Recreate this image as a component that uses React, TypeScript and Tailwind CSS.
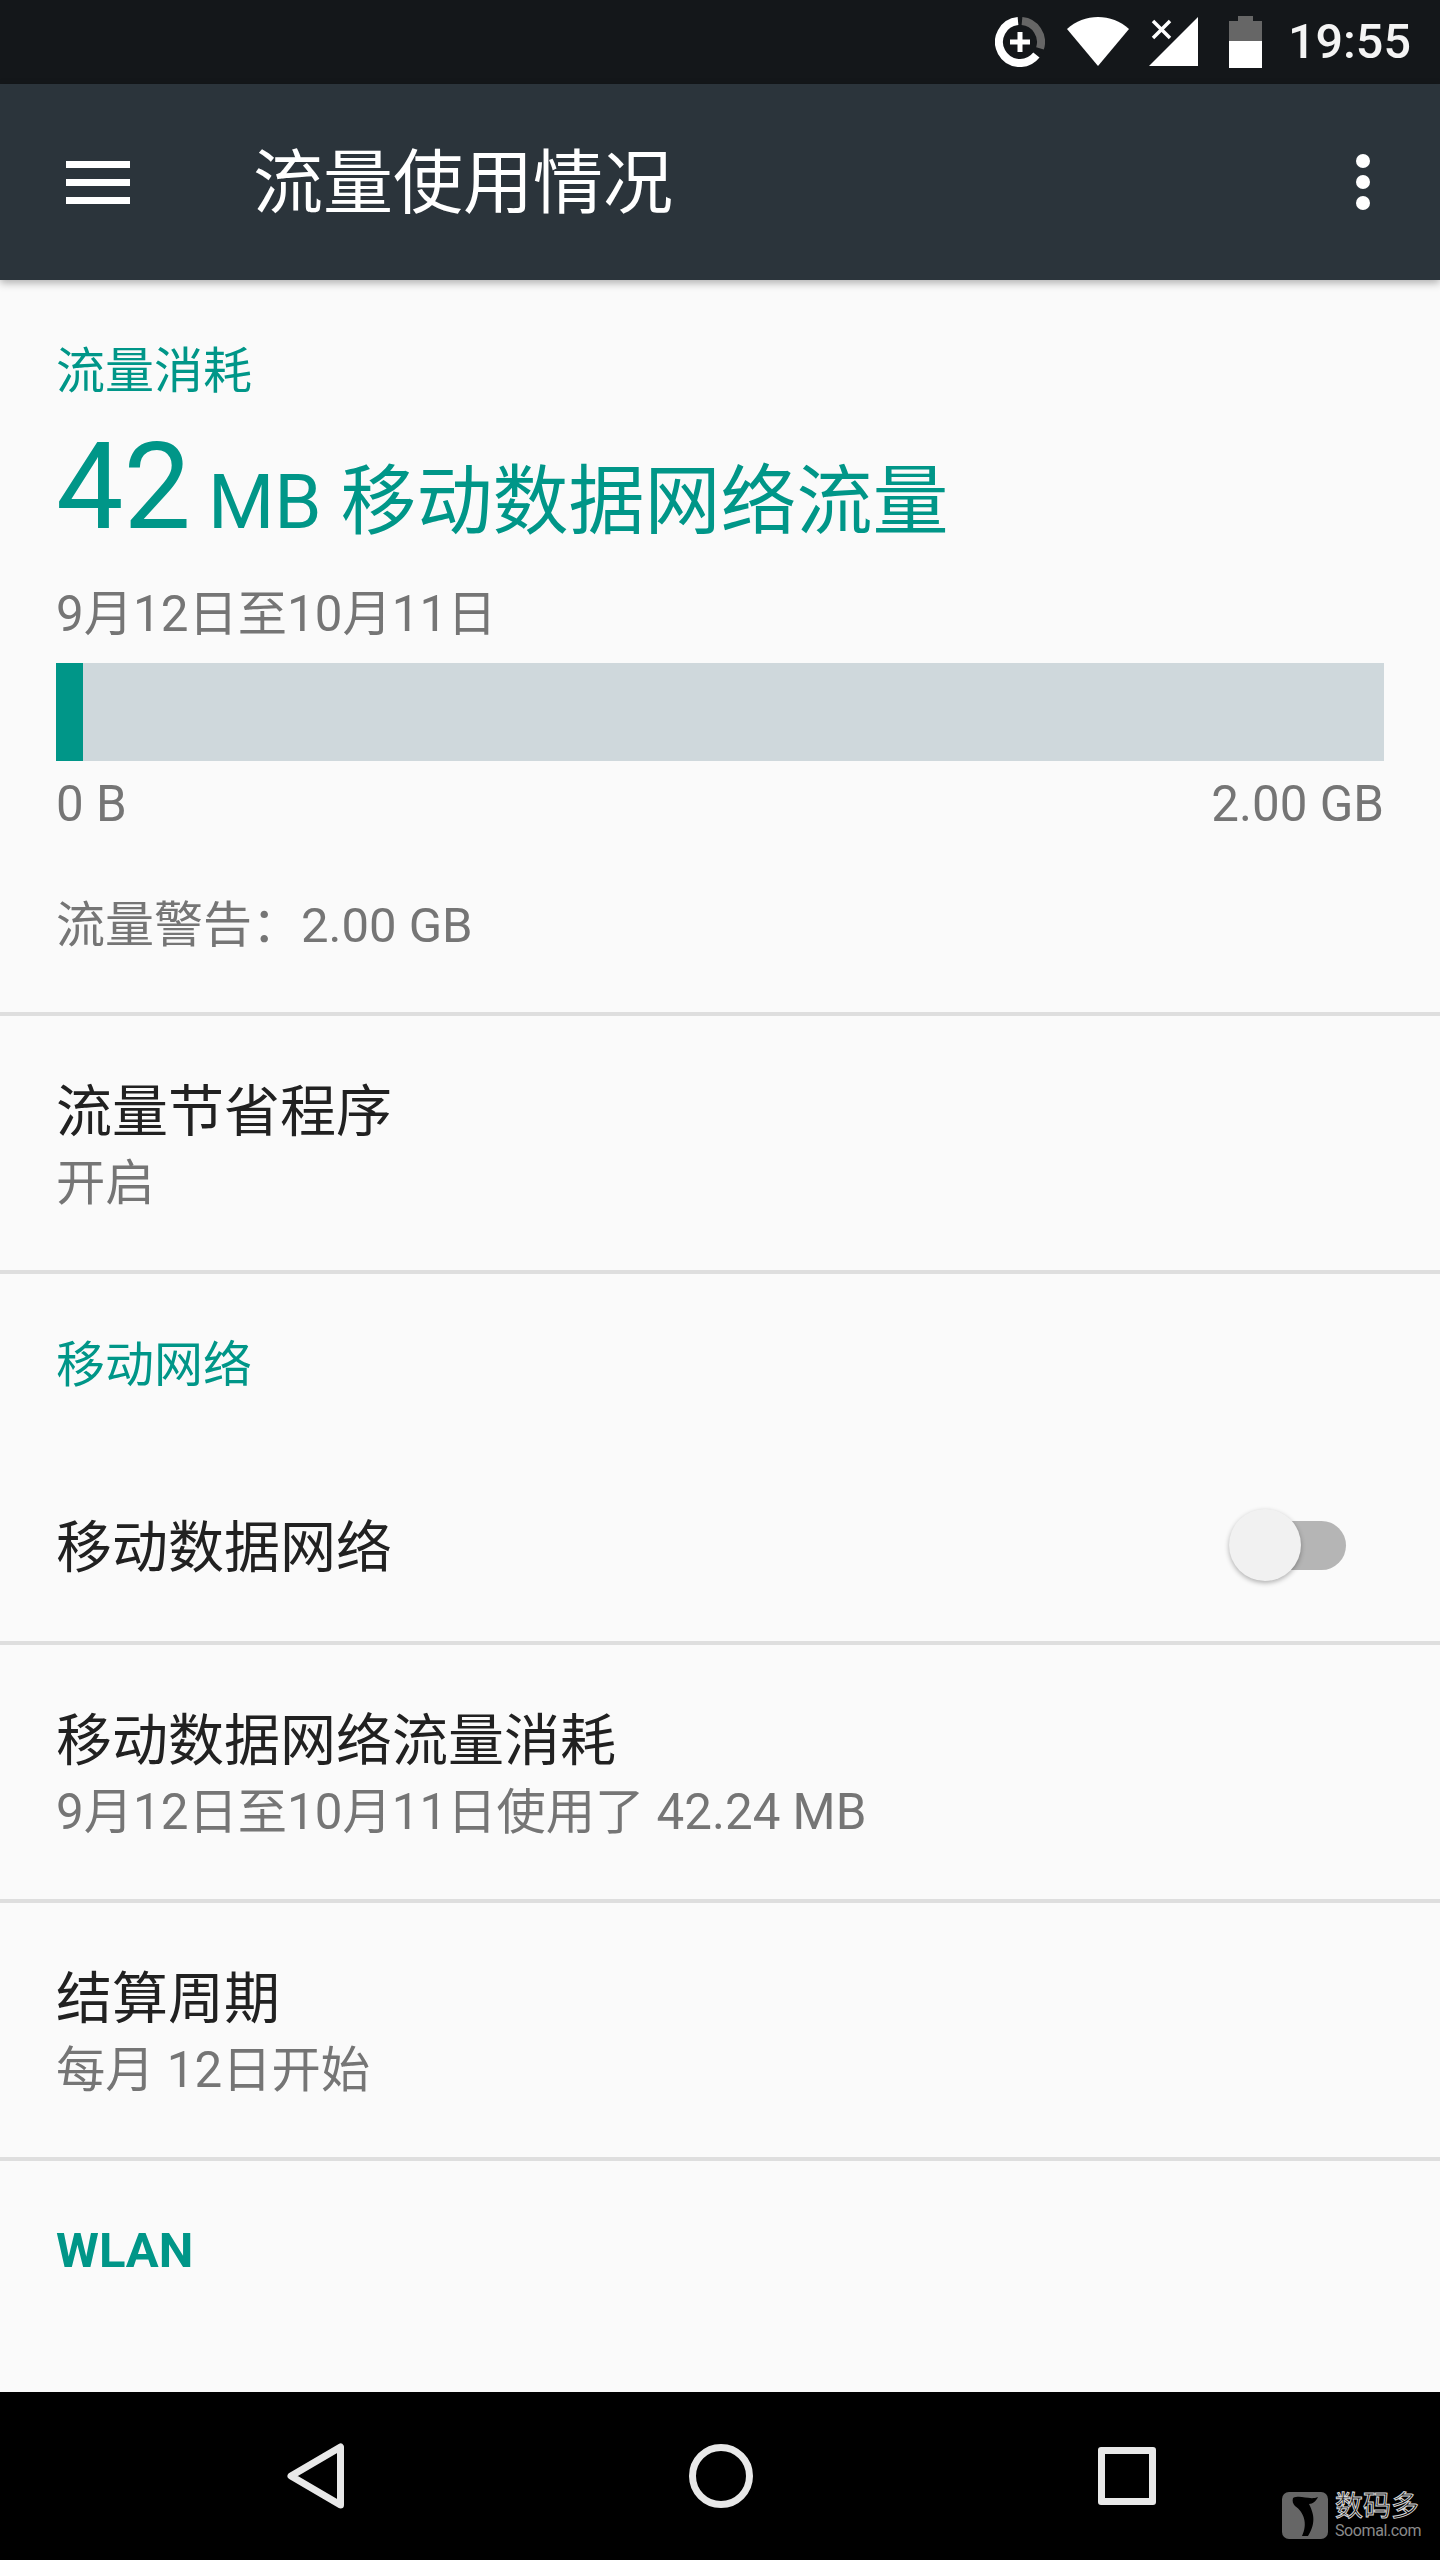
const font = 'font-[Roboto,"Noto_Sans_CJK_SC",sans-serif]'

function DataSaverIcon() {
  return (
    <svg width="50" height="50" viewBox="0 0 50 50" fill="none">
      <path d="M27 4.1 A21 21 0 0 1 45 31.4" stroke="#666" strokeWidth="8" />
      <path d="M23 4.1 A21 21 0 1 0 41.4 38.1" stroke="#fff" strokeWidth="8" />
      <path d="M25 15 V35 M15 25 H35" stroke="#fff" strokeWidth="5" />
    </svg>
  )
}

function WifiIcon() {
  return (
    <svg width="62" height="50" viewBox="0 0 62 50">
      <path d="M0 12 C17 -4 45 -4 62 12 L31 49 Z" fill="#fff" />
    </svg>
  )
}

function SignalIcon() {
  return (
    <svg width="50" height="50" viewBox="0 0 50 50">
      <path d="M49 0 V49 H0 Z" fill="#fff" />
      <path d="M4 4 L21 21 M21 4 L4 21" stroke="#fff" strokeWidth="3.5" />
    </svg>
  )
}

function BatteryIcon() {
  return (
    <svg width="33" height="52" viewBox="0 0 33 52">
      <path d="M9 0 H24 V5 H33 V25 H0 V5 H9 Z" fill="#666" />
      <rect x="0" y="25" width="33" height="27" fill="#fff" />
    </svg>
  )
}

function StatusBar() {
  return (
    <div className="h-[84px] bg-[#14171a] flex items-center justify-end pr-[29px]">
      <DataSaverIcon />
      <div className="ml-[22px]"><WifiIcon /></div>
      <div className="ml-[20px]"><SignalIcon /></div>
      <div className="ml-[30px]"><BatteryIcon /></div>
      <span className="ml-[26px] text-[48.5px] leading-none font-medium text-[#f4f4f4]">19:55</span>
    </div>
  )
}

function AppBar() {
  return (
    <div className="relative z-10 h-[196px] bg-[#2b343b] flex items-center shadow-[0_3px_8px_rgba(0,0,0,0.3)]">
      <div className="ml-[66px] w-[64px] flex flex-col gap-[11px]">
        <div className="h-[7px] bg-white" />
        <div className="h-[7px] bg-white" />
        <div className="h-[7px] bg-white" />
      </div>
      <h1 className="ml-[123px] mt-[4px] text-[70px] leading-none font-normal text-white">流量使用情况</h1>
      <div className="ml-auto mr-[70px] flex flex-col gap-[7px]">
        <div className="size-[14px] rounded-full bg-white" />
        <div className="size-[14px] rounded-full bg-white" />
        <div className="size-[14px] rounded-full bg-white" />
      </div>
    </div>
  )
}

function Divider() {
  return <div className="h-[4px] bg-[#dedede]" />
}

function SectionLabel({ children, className }: { children: React.ReactNode; className: string }) {
  return <div className={`px-[56px] text-[49px] leading-[64px] text-[#009688] ${className}`}>{children}</div>
}

function Row({ title, sub }: { title: string; sub: string }) {
  return (
    <div className="h-[254px] px-[56px] pt-[60px]">
      <div className="text-[56px] leading-[72px] text-[#212121]">{title}</div>
      <div className="text-[49.3px] leading-[64px] mt-[3px] text-[#757575]">{sub}</div>
    </div>
  )
}

function UsageSummary() {
  return (
    <div className="h-[732px]">
      <SectionLabel className="pt-[60px]">流量消耗</SectionLabel>
      <div className="px-[56px] mt-[23px] h-[120px] flex items-baseline text-[#009688]">
        <span className="text-[120px] leading-[120px]">42</span>
        <span className="ml-[17px] text-[76px] leading-[120px]">MB 移动数据网络流量</span>
      </div>
      <div className="px-[56px] mt-[35px] text-[49.3px] leading-[64px] text-[#757575]">9月12日至10月11日</div>
      <div className="mx-[56px] mt-[17px] h-[98px] bg-[#cfd8dc]">
        <div className="w-[27px] h-full bg-[#009688]" />
      </div>
      <div className="px-[56px] mt-[11px] flex justify-between text-[49.3px] leading-[64px] text-[#757575]">
        <span>0 B</span>
        <span>2.00 GB</span>
      </div>
      <div className="px-[56px] mt-[58px] text-[49px] leading-[64px] text-[#757575]">流量警告：2.00 GB</div>
    </div>
  )
}

function MobileNetworkToggle() {
  return (
    <div className="h-[243px] px-[56px] flex items-start justify-between">
      <div className="mt-[114px] text-[56px] leading-[72px] text-[#212121]">移动数据网络</div>
      <div className="relative mt-[111px] mr-[38px] w-[117px] h-[72px] flex items-center">
        <div className="ml-[11px] w-[106px] h-[49px] rounded-full bg-[#b5b5b5]" />
        {/* thumb sits over the track */}
        <div className="absolute left-0 top-0 size-[72px] rounded-full bg-[#f1f1f1] shadow-[0_2px_5px_rgba(0,0,0,0.3)]" />
      </div>
    </div>
  )
}

function NavBar() {
  return (
    <div className="relative h-[168px] bg-black flex items-center pl-[287px] gap-[345px]">
      <svg width="57" height="66" viewBox="0 0 57 66" fill="none">
        <path d="M53.5 4 V62 L4 33 Z" stroke="#e8e8e8" strokeWidth="7" strokeLinejoin="round" />
      </svg>
      <svg width="64" height="66" viewBox="0 0 64 66" fill="none">
        <circle cx="32" cy="33" r="28.5" stroke="#e8e8e8" strokeWidth="7" />
      </svg>
      <div className="size-[58px] rounded-[3px] border-[7px] border-[#e8e8e8]" />
      {/* watermark */}
      <div className="absolute left-[1282px] top-[100px] flex gap-[7px]">
        <svg width="46" height="47" viewBox="0 0 46 47">
          <rect width="46" height="47" rx="7" fill="#666" />
          <path d="M11 6 C18 3 24 7 33 6 L36 5 C34 9 31 12 27 12 C31 20 35 30 26 44 L20 44 C26 32 22 20 13 14 C11 12 10 9 11 6 Z" fill="#000" />
        </svg>
        <div className="w-[86px]">
          <div className="text-[28px] leading-[30px] text-transparent [-webkit-text-stroke:1px_#d8d8d8]">数码多</div>
          <div className="text-[16px] leading-[17px] tracking-[-0.4px] text-[#8a8a8a]">Soomal.com</div>
        </div>
      </div>
    </div>
  )
}

export default function App() {
  return (
    <div className={`w-[1440px] h-[2560px] flex flex-col bg-[#fafafa] overflow-hidden ${font}`}>
      <StatusBar />
      <AppBar />
      <main className="flex-1 min-h-0">
        <UsageSummary />
        <Divider />
        <Row title="流量节省程序" sub="开启" />
        <Divider />
        <SectionLabel className="pt-[60px]">移动网络</SectionLabel>
        <MobileNetworkToggle />
        <Divider />
        <Row title="移动数据网络流量消耗" sub="9月12日至10月11日使用了 42.24 MB" />
        <Divider />
        <Row title="结算周期" sub="每月 12日开始" />
        <Divider />
        <SectionLabel className="pt-[58px] font-bold">WLAN</SectionLabel>
      </main>
      <NavBar />
    </div>
  )
}
